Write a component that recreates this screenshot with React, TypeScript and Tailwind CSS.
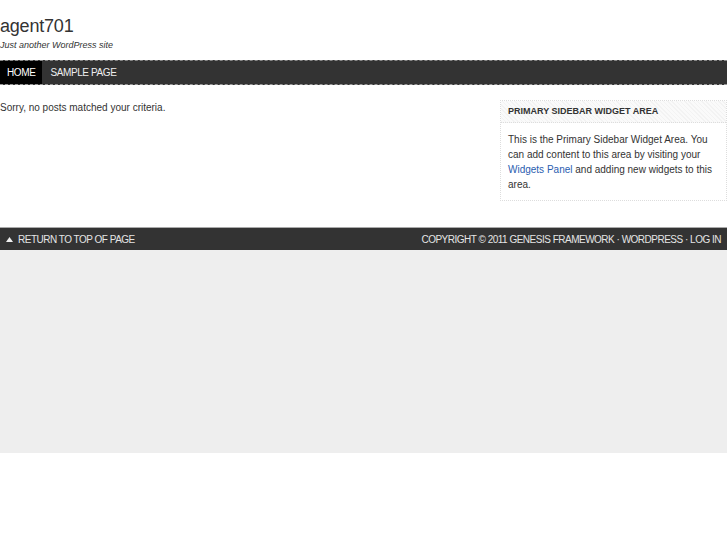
export default function App() {
  return (
    <div className="min-h-screen bg-white text-[#333] font-['Liberation_Sans',Arial,sans-serif]">
      {/* Header */}
      <div className="h-[60px] pt-[14px]">
        <h1 className="text-[18px] leading-[24px] text-[#333] tracking-[-0.2px]">agent701</h1>
        <p className="text-[9px] leading-[12px] italic text-[#333] mt-[1px]">Just another WordPress site</p>
      </div>

      {/* Nav */}
      <div className="h-[25px] bg-[#333] border-t border-dashed border-[#888] border-b border-b-[#999] flex text-[10px] text-white uppercase tracking-[-0.4px]">
        <a className="bg-black px-[7px] flex items-center">Home</a>
        <a className="px-[8px] flex items-center text-[#eee]">Sample Page</a>
      </div>

      {/* Content + sidebar */}
      <div className="h-[142px] flex justify-between">
        <p className="text-[10px] leading-[14px] mt-[16px] text-[#333]">Sorry, no posts matched your criteria.</p>
        <div className="w-[227px] h-[101px] mt-[15px] border border-dotted border-[#ddd]">
          <h4 className="h-[22px] flex items-center px-[7px] text-[9px] font-bold uppercase text-[#333] border-b border-dotted border-[#ddd] bg-[repeating-linear-gradient(45deg,#f3f3f3_0px,#f3f3f3_1px,#fafafa_1px,#fafafa_3px)]">
            Primary Sidebar Widget Area
          </h4>
          <p className="px-[7px] pt-[9px] text-[10px] leading-[15px] text-[#333]">
            This is the Primary Sidebar Widget Area. You can add content to this area by visiting your{' '}
            <a className="text-[#2a5db0]">Widgets Panel</a> and adding new widgets to this area.
          </p>
        </div>
      </div>

      {/* Footer */}
      <div className="h-[23px] bg-[#333] border-t border-[#aaa] flex items-center justify-between text-[10px] uppercase text-[#e5e5e5] tracking-[-0.5px] px-[6px]">
        <span className="flex items-center gap-[5px]">
          <svg width="7" height="5" viewBox="0 0 7 5"><path d="M3.5 0L7 5H0z" fill="#eee" /></svg>
          Return to top of page
        </span>
        <span>Copyright © 2011 Genesis Framework · WordPress · Log in</span>
      </div>

      <div className="h-[203px] bg-[#eee]" />
    </div>
  );
}
